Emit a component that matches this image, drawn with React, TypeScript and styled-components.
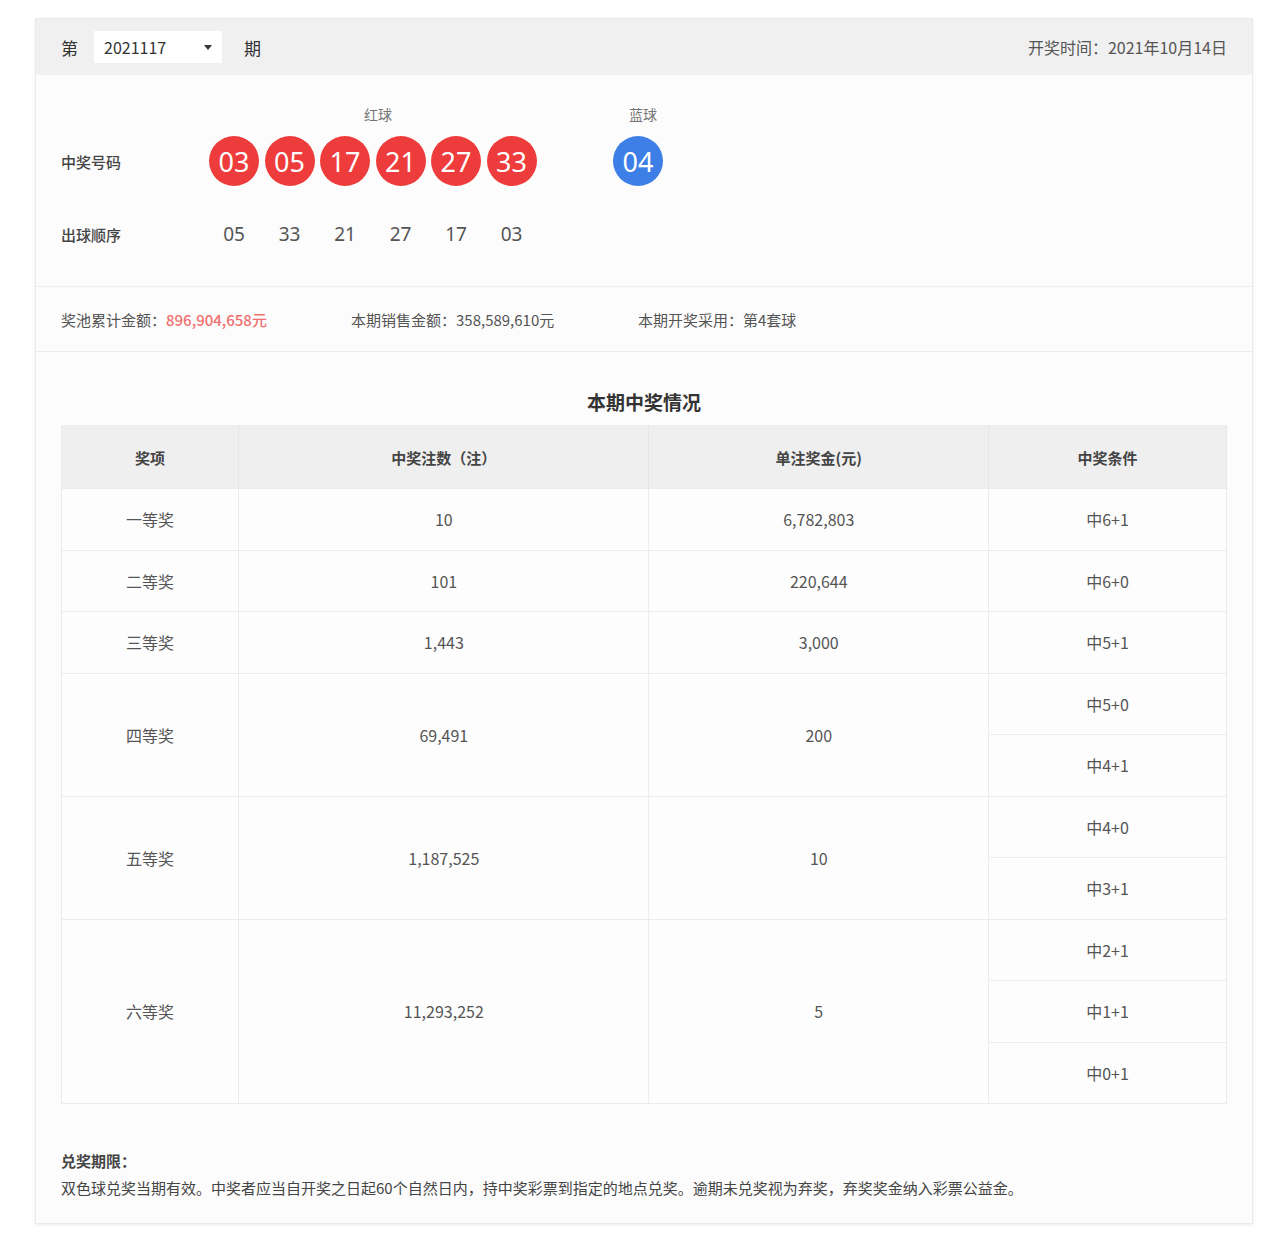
import React from "react";
import styled, { createGlobalStyle } from "styled-components";

const G = createGlobalStyle`
  body { margin: 0; background: #fff; font-family: "Noto Sans CJK SC", "Noto Sans", sans-serif; color: #333; }
`;
const Page = styled.div`padding: 18px 27px 20px 35px;`;
const Card = styled.div`border: 1px solid #ebebeb; background: #fcfcfc; box-shadow: 0 1px 3px rgba(0,0,0,0.08);`;
const Header = styled.div`height: 56px; background: #f0f0f0; display: flex; align-items: center; padding: 0 25px; font-size: 17px; color: #333;`;
const Select = styled.div`margin: 0 22px 0 16px; background: #fff; height: 32px; width: 128px; display: flex; align-items: center; justify-content: space-between; padding: 0 10px; box-sizing: border-box; font-size: 16px;`;
const Arrow = styled.span`width: 0; height: 0; border-left: 4px solid transparent; border-right: 4px solid transparent; border-top: 5px solid #333;`;
const Date = styled.div`margin-left: auto; font-size: 16px; color: #555;`;
const Balls = styled.div`padding: 29px 25px 6px; border-bottom: 1px solid #eee; display: grid; grid-template-columns: 148px 338px 66px 60px;`;
const Lbl = styled.div`font-size: 15px; font-weight: 500; color: #444; display: flex; align-items: center;`;
const Sub = styled.div`font-size: 14px; color: #777; text-align: center; height: 20px; line-height: 20px; margin-bottom: 10px;`;
const Row = styled.div`display: flex; gap: 5.5px; height: 54px; align-items: center;`;
const Ball = styled.div<{ $blue?: boolean }>`width: 50px; height: 50px; border-radius: 50%; background: ${p => p.$blue ? "#3d7fe6" : "#ee3b3b"}; color: #fff; font-size: 27px; display: flex; align-items: center; justify-content: center; font-family: "Noto Sans", sans-serif;`;
const Seq = styled.div`display: flex; gap: 5.5px; height: 92px; align-items: center;`;
const SeqN = styled.span`width: 50px; text-align: center; font-size: 19px; color: #555; font-family: "Noto Sans", sans-serif;`;
const Stats = styled.div`height: 64px; border-bottom: 1px solid #eee; display: flex; align-items: center; padding: 0 25px; font-size: 15px; color: #555;`;
const Stat = styled.span<{ $w: number }>`width: ${p => p.$w}px;`;
const Red = styled.span`color: #f07070; font-weight: 500;`;
const Main = styled.div`padding: 36px 25px 0;`;
const Title = styled.div`text-align: center; font-size: 19px; font-weight: 700; color: #333; line-height: 27px; margin-bottom: 10px;`;
const Table = styled.table`width: 100%; border-collapse: collapse; font-size: 16px; color: #555; border: 1px solid #eee; line-height: 1;`;
const Th = styled.th<{ $w: number }>`width: ${p => p.$w}px; height: 62px; padding: 0; background: #efefef; font-weight: 600; color: #444; font-size: 15px; border-right: 1px solid #e6e6e6;`;
const Td = styled.td`height: 60.5px; padding: 0; text-align: center; border: 1px solid #ececec; background: #fdfdfd;`;
const Foot = styled.div`padding: 46px 25px 25px; font-size: 15px; color: #444;`;
const FootT = styled.div`font-weight: 700; margin-bottom: 6px;`;

const rows: [string, string, string, string[]][] = [
  ["一等奖", "10", "6,782,803", ["中6+1"]],
  ["二等奖", "101", "220,644", ["中6+0"]],
  ["三等奖", "1,443", "3,000", ["中5+1"]],
  ["四等奖", "69,491", "200", ["中5+0", "中4+1"]],
  ["五等奖", "1,187,525", "10", ["中4+0", "中3+1"]],
  ["六等奖", "11,293,252", "5", ["中2+1", "中1+1", "中0+1"]],
];

export default function App() {
  return (
    <Page>
      <G />
      <Card>
        <Header>第<Select>2021117<Arrow /></Select>期<Date>开奖时间：2021年10月14日</Date></Header>
        <Balls>
          <div /><Sub>红球</Sub><div /><Sub>蓝球</Sub>
          <Lbl>中奖号码</Lbl>
          <Row>{["03","05","17","21","27","33"].map(n => <Ball key={n}>{n}</Ball>)}</Row>
          <div />
          <Row><Ball $blue>04</Ball></Row>
          <Lbl>出球顺序</Lbl>
          <Seq>{["05","33","21","27","17","03"].map(n => <SeqN key={n}>{n}</SeqN>)}</Seq>
        </Balls>
        <Stats>
          <Stat $w={290}>奖池累计金额：<Red>896,904,658元</Red></Stat>
          <Stat $w={287}>本期销售金额：358,589,610元</Stat>
          <Stat $w={300}>本期开奖采用：第4套球</Stat>
        </Stats>
        <Main>
          <Title>本期中奖情况</Title>
          <Table>
            <thead><tr><Th $w={177}>奖项</Th><Th $w={411}>中奖注数（注）</Th><Th $w={340}>单注奖金(元)</Th><Th $w={238}>中奖条件</Th></tr></thead>
            <tbody>
              {rows.flatMap(([a, b, c, conds]) => conds.map((cd, i) => (
                <tr key={a + i}>
                  {i === 0 && <><Td rowSpan={conds.length}>{a}</Td><Td rowSpan={conds.length}>{b}</Td><Td rowSpan={conds.length}>{c}</Td></>}
                  <Td>{cd}</Td>
                </tr>
              )))}
            </tbody>
          </Table>
        </Main>
        <Foot>
          <FootT>兑奖期限：</FootT>
          双色球兑奖当期有效。中奖者应当自开奖之日起60个自然日内，持中奖彩票到指定的地点兑奖。逾期未兑奖视为弃奖，弃奖奖金纳入彩票公益金。
        </Foot>
      </Card>
    </Page>
  );
}
